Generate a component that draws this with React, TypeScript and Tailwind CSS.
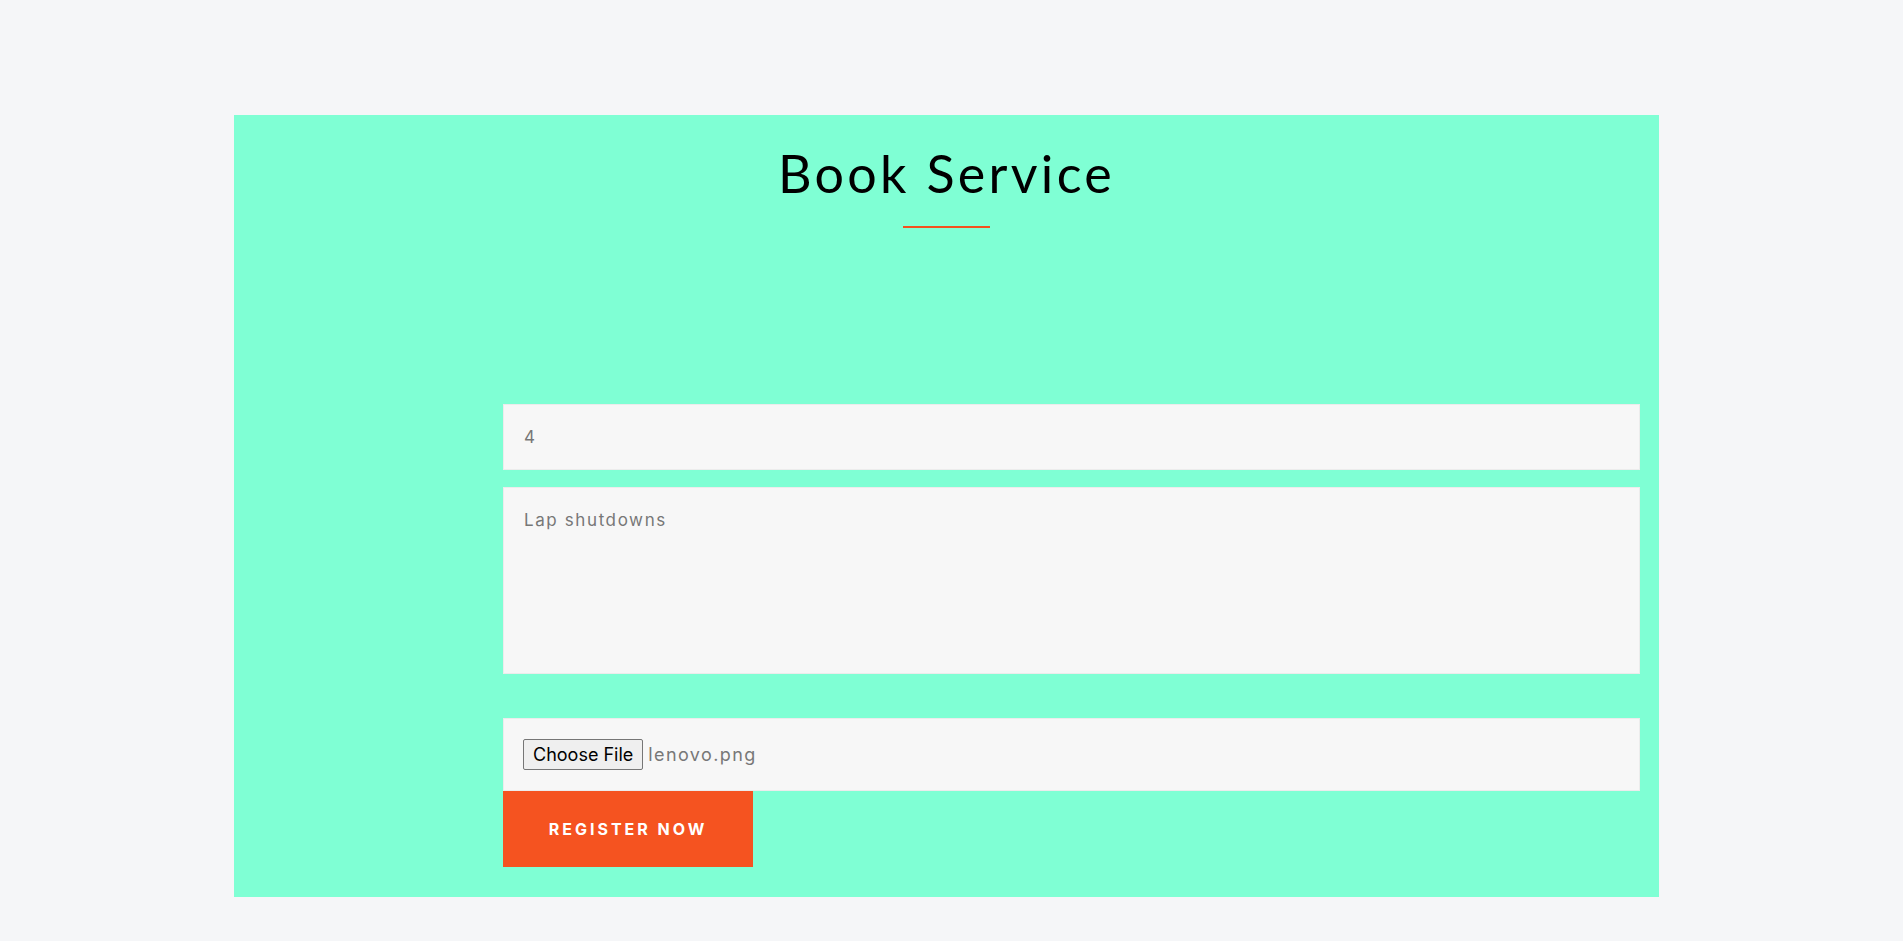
const App = () => {
  const poppins = { fontFamily: '"Inter", "Noto Sans", sans-serif' };

  return (
    <div className="min-h-[1700px] bg-[#f5f6f8] pt-[115px]" style={poppins}>
      <section className="ml-[234px] w-[1425px] bg-[#7fffd4] pb-[30px]">
        <div className="flex flex-col items-center pt-[26px]">
          <h2 className="text-[52px] leading-[64px] tracking-[3.3px] text-black font-['Lato',sans-serif] font-normal">
            Book Service
          </h2>
          <div className="mt-[21px] h-[2px] w-[87px] bg-[#f4511e]"></div>
        </div>

        <form className="ml-[269px] mr-[19px] mt-[176px] flex flex-col">
          <input
            type="text"
            defaultValue="4"
            className="h-[66px] w-full border border-[#ececec] bg-[#f7f7f7] px-[20px] text-[17px] tracking-[1.6px] text-[#777] outline-none"
          />
          <textarea
            defaultValue="Lap shutdowns"
            className="mt-[17px] h-[187px] w-full resize-none border border-[#ececec] bg-[#f7f7f7] px-[20px] pt-[20px] text-[17px] tracking-[1.6px] text-[#777] outline-none"
          />
          <div className="mt-[44px] flex h-[73px] w-full items-center border border-[#ececec] bg-[#f7f7f7] px-[19px]">
            <span className="flex h-[31px] items-center rounded-[2px] border border-[#767676] bg-[#efefef] px-[9px] text-[18px] text-black">
              Choose File
            </span>
            <span className="ml-[5px] text-[18px] tracking-[1.4px] text-[#777]">lenovo.png</span>
          </div>
          <button
            type="button"
            className="h-[76px] w-[250px] bg-[#f55320] text-[16px] font-bold tracking-[3px] text-white"
          >
            REGISTER NOW
          </button>
        </form>
      </section>
    </div>
  );
};

export default App;
